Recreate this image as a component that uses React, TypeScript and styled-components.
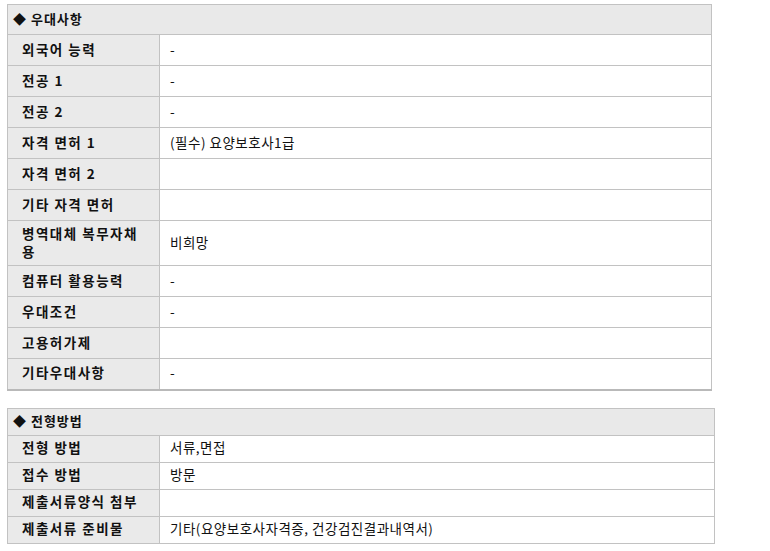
import React from "react";
import styled, { createGlobalStyle } from "styled-components";

const GlobalStyle = createGlobalStyle`
  body {
    margin: 0;
    background: #ffffff;
    font-family: "Noto Sans CJK KR", "Noto Sans", sans-serif;
    color: #111111;
  }
`;

const Page = styled.div`
  padding: 4px 0 0 7px;
  width: 763px;
  box-sizing: border-box;
`;

const Table = styled.table<{ $width: number; $thickBottom?: boolean }>`
  width: ${(p) => p.$width}px;
  border-collapse: collapse;
  table-layout: fixed;
  border: 1px solid #c2c2c2;
  border-bottom: ${(p) => (p.$thickBottom ? "2px solid #b9b9b9" : "1px solid #c2c2c2")};
  margin-bottom: 17px;
`;

const LabelCol = styled.col`
  width: 152px;
`;

const HeadCell = styled.th<{ $h: number }>`
  height: ${(p) => p.$h}px;
  padding: 0 0 2px 5px;
  text-align: left;
  background: #e9e9e9;
  border: 1px solid #c2c2c2;
  font-size: 13px;
  font-weight: 700;
  letter-spacing: 1px;
  box-sizing: border-box;
`;

const Label = styled.th<{ $h: number }>`
  height: ${(p) => p.$h}px;
  padding: 0 12px 3px 14px;
  text-align: left;
  background: #eaeaea;
  border: 1px solid #c2c2c2;
  font-size: 13.5px;
  font-weight: 700;
  letter-spacing: 1.5px;
  line-height: 18px;
  box-sizing: border-box;
`;

const Value = styled.td`
  padding: 0 10px 2px;
  background: #ffffff;
  border: 1px solid #c2c2c2;
  font-size: 13.5px;
  letter-spacing: 0.5px;
  line-height: 17px;
`;

type Row = { label: string; value: string; tall?: boolean };

const benefits: Row[] = [
  { label: "외국어 능력", value: "-" },
  { label: "전공 1", value: "-" },
  { label: "전공 2", value: "-" },
  { label: "자격 면허 1", value: "(필수) 요양보호사1급" },
  { label: "자격 면허 2", value: "" },
  { label: "기타 자격 면허", value: "" },
  { label: "병역대체 복무자채용", value: "비희망", tall: true },
  { label: "컴퓨터 활용능력", value: "-" },
  { label: "우대조건", value: "-" },
  { label: "고용허가제", value: "" },
  { label: "기타우대사항", value: "-" },
];

const selection: Row[] = [
  { label: "전형 방법", value: "서류,면접" },
  { label: "접수 방법", value: "방문" },
  { label: "제출서류양식 첨부", value: "" },
  { label: "제출서류 준비물", value: "기타(요양보호사자격증, 건강검진결과내역서)" },
];

function InfoTable({
  title,
  rows,
  width,
  headH,
  rowH,
  thickBottom,
}: {
  title: string;
  rows: Row[];
  width: number;
  headH: number;
  rowH: number;
  thickBottom?: boolean;
}) {
  return (
    <Table $width={width} $thickBottom={thickBottom}>
      <colgroup>
        <LabelCol />
        <col />
      </colgroup>
      <thead>
        <tr>
          <HeadCell $h={headH} colSpan={2}>
            ◆ {title}
          </HeadCell>
        </tr>
      </thead>
      <tbody>
        {rows.map((r) => (
          <tr key={r.label}>
            <Label $h={r.tall ? 45 : rowH}>{r.label}</Label>
            <Value>{r.value}</Value>
          </tr>
        ))}
      </tbody>
    </Table>
  );
}

export default function App() {
  return (
    <>
      <GlobalStyle />
      <Page>
        <InfoTable title="우대사항" rows={benefits} width={705} headH={30} rowH={31} thickBottom />
        <InfoTable title="전형방법" rows={selection} width={708} headH={27} rowH={27} />
      </Page>
    </>
  );
}
